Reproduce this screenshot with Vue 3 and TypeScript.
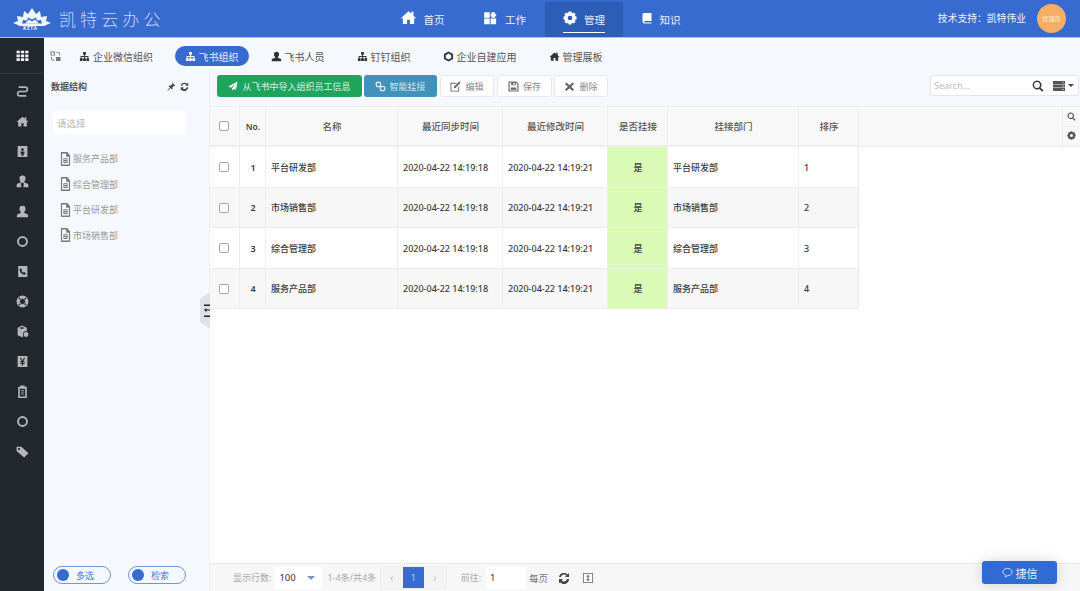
<script setup lang="ts">
function gear(): string {
  const pts: string[] = []
  const n = 8
  for (let i = 0; i < n; i++) {
    const a = (i / n) * Math.PI * 2
    const w = Math.PI / n
    const seq: [number, number][] = [[9, -w * 0.95], [11.5, -w * 0.5], [11.5, w * 0.5], [9, w * 0.95]]
    for (const [r, d] of seq) {
      pts.push(`${(12 + r * Math.cos(a + d)).toFixed(2)} ${(12 + r * Math.sin(a + d)).toFixed(2)}`)
    }
  }
  return `M${pts.join('L')}z M12 8a4 4 0 1 0 0 8a4 4 0 1 0 0-8z`
}

const icons: Record<string, string> = {
  home: 'M12 3L1 13h3v8h6v-6h4v6h6v-8h3l-4-3.6V4h-3v2.7z',
  work: 'M2 2h9.500v9.500H2zM2 13h9.500v9.500H2zM13 13h9.500v9.500H13zM14.500 2h6v3h2v4h-2v2.500h-6V9H13V5h1.500z',
  gear: gear(),
  book: 'M6 2h15v16H7.500a1.600 1.600 0 0 0 0 3H21v2H7a4 4 0 0 1-4-4V5a3 3 0 0 1 3-3z',
  sitemap: 'M9 2h6v6h-2v3h7.500v5H22v6h-6v-6h2.500v-3H13v3h2v6H9v-6h2v-3H5.500v3H8v6H2v-6h1.500v-5H11V8H9z',
  user: 'M12 1.500a5.500 5.500 0 0 1 5.500 6c0 2.200-1 4.500-2.500 5.500v1.500l6 2.500c1 .5 1.500 2 1.500 5.500H1.500c0-3.500.5-5 1.500-5.500l6-2.500V13C7.500 12 6.500 9.700 6.500 7.500a5.500 5.500 0 0 1 5.500-6z',
  hex: 'M12 1l10 5.500v11L12 23 2 17.500v-11zM12 5.500L6 9v6l6 3.500 6-3.500V9z',
  plane: 'M23 1L1 13l6 3L19 6 10 17.500V23l4-4 5 2z',
  times: 'M5.500 3L12 9l6.500-6L22 6.500 15.500 12.500 22 18.500 18.500 22 12 16l-6.500 6L2 18.500l6.500-6L2 6.500z',
  save: 'M1 1h17l5 5v17H1zM3.500 3.500v17h17V7l-3.500-3.500v6H7v-6zM11.500 4v4h3V4zM6 14h12v5H6z',
  edit: 'M1 4h14l-2 2H3v15h15v-8l2-2v12H1zM20 1l3 3-11 11-4 1 1-4z',
  tie: 'M12 1a5.500 5.500 0 0 1 5.500 6c0 2.200-.8 4.200-2.500 5.500v1l6.500 2.500c1 .4 1.500 2 1.500 6.500h-9.500l1-7-1.500-1h-2.500l-1.500 1 1 7H1c0-4.500.5-6.100 1.500-6.500L9 13.500v-1C7.300 11.200 6.500 9.200 6.500 7A5.500 5.500 0 0 1 12 1z',
  door: 'M3 2h18v20H3zM12 6a2.500 2.500 0 1 0 0 5 2.500 2.500 0 0 0 0-5zM8.500 12v4H10v4h4v-4h1.500v-4z',
  phone: 'M4 2h17v20H4zM8.500 6L6.500 8c0 5 4.500 10 10 10l2-2-3-3-2 1c-1.500-.7-2.800-2-3.500-3.500l1-2z',
  life: 'M12 1a11 11 0 1 0 0 22 11 11 0 0 0 0-22zM12 7a5 5 0 1 0 0 10 5 5 0 0 0 0-10zM4.500 6L6 4.500l4 4L8.500 10zM19.500 6L18 4.500l-4 4 1.500 1.500zM4.500 18L6 19.500l4-4L8.500 14zM19.500 18L18 19.500l-4-4 1.500-1.500z',
  cube: 'M11 1l9 4v6.500a5.500 5.500 0 0 0-7 7V23l-10-4V5zM11 3.500L6 5.500l5 2 5-2zM18.500 13a4.500 4.500 0 1 0 0 9 4.500 4.500 0 0 0 0-9z',
  yen: 'M3 2h18v20H3zM7 5l3.500 6H8v2h3v1.500H8v2h3V20h2v-3.500h3v-2h-3V13h3v-2h-2.500L17 5h-2.300L12 10 9.300 5z',
  clip: 'M4 3h4V1h8v2h4v21H4zM7 7v14h10V7zM9 9h6v1.500H9zM9 12.500h6V14H9zM9 16h6v1.500H9z',
  ring: 'M12 2a10 10 0 1 0 0 20 10 10 0 0 0 0-20zM12 5.500a6.500 6.500 0 1 1 0 13 6.500 6.500 0 0 1 0-13z',
  tags: 'M1 3h9l13 12-8 8L1 11zM5.500 5.500a2 2 0 1 0 0 4 2 2 0 0 0 0-4z',
  doc: 'M3 0h13l6 6v16a2 2 0 0 1-2 2H4a2 2 0 0 1-2-2V1zM4.500 2.500v19h15V8h-6V2.500zM7.500 10.500h9v8.500h-9zM9 12.500v1h6v-1zM9 15.500v1h6v-1z',
  refresh: 'M12 2a10 10 0 0 1 7 2.800L22 2v8h-8l2.800-2.800A6.500 6.500 0 0 0 5.800 10H2a10 10 0 0 1 10-8zM2 14h8l-2.800 2.800A6.500 6.500 0 0 0 18.200 14H22a10 10 0 0 1-17 7.200L2 22z',
  magnifier: 'M10 1a9 9 0 0 1 7.200 14.400L23 21.200 20.600 23.600l-5.800-5.800A9 9 0 1 1 10 1zM10 4.200a5.800 5.800 0 1 0 0 11.600 5.800 5.800 0 0 0 0-11.600z',
  fit: 'M2 2h20v20H2zM3.500 3.500v17h17v-17zM12 5.500l3.500 4H13v5h2.500L12 18.500l-3.500-4H11v-5H8.500z',
  grid3: 'M1 3h6v5H1zM9 3h6v5H9zM17 3h6v5h-6zM1 10h6v5H1zM9 10h6v5H9zM17 10h6v5h-6zM1 17h6v5H1zM9 17h6v5H9zM17 17h6v5h-6z',
  pin: 'M14 2l8 8-2 1-1.500-1-4 4 .5 4-2 2-3.500-4L2 23l-1-1 7-7.500-3.500-3.500 2-2 4 .5 4-4-1-1.500z',
  sync: 'M1 1h10v9H1zM3 3v5h6V3zM14 2h4a4 4 0 0 1 4 4v3h-2V6a2 2 0 0 0-2-2h-4zM2 13h2v3a3 3 0 0 0 3 3h3v2H7a5 5 0 0 1-5-5zM13 13h10v9H13z',
  route: 'M5 4h12a4 4 0 0 1 0 8H7a4 4 0 0 0 0 8h12',
}

const rail = ['route', 'home', 'door', 'tie', 'user', 'ring', 'phone', 'life', 'cube', 'yen', 'clip', 'ring', 'tags']

const navs = [
  { icon: 'home', label: '首页', active: false },
  { icon: 'work', label: '工作', active: false },
  { icon: 'gear', label: '管理', active: true },
  { icon: 'book', label: '知识', active: false },
]

const tabs = [
  { icon: 'sitemap', label: '企业微信组织', active: false },
  { icon: 'sitemap', label: '飞书组织', active: true },
  { icon: 'user', label: '飞书人员', active: false },
  { icon: 'sitemap', label: '钉钉组织', active: false },
  { icon: 'hex', label: '企业自建应用', active: false },
  { icon: 'home', label: '管理展板', active: false },
]

const tree = ['服务产品部', '综合管理部', '平台研发部', '市场销售部']

const actions = [
  { icon: 'edit', label: '编辑', width: 54 },
  { icon: 'save', label: '保存', width: 55 },
  { icon: 'times', label: '删除', width: 54 },
]

const columns = ['名称', '最近同步时间', '最近修改时间', '是否挂接', '挂接部门', '排序']

const rows = [
  { no: 1, name: '平台研发部' },
  { no: 2, name: '市场销售部' },
  { no: 3, name: '综合管理部' },
  { no: 4, name: '服务产品部' },
]
</script>

<template>
  <div class="app">
    <header class="topbar">
      <div class="brand">
        <div class="logo">
          <svg viewBox="0 0 38 23" width="38" height="23">
            <path
              class="logo-star"
              fill-rule="evenodd"
              d="M0 15l5-2-1-5 6 1 1-6 4 3 4-6 4 6 4-3 1 6 6-1-1 5 5 2-5 2-1 1H6l-1-1zM9 15.500h20l-1-3.500-4 .5-1-3-4 2-4-2-1 3-4-.5z"
            />
            <path class="logo-star" d="M12 15.500l4-4 3 2 3-2 4 4z" />
          </svg>
          <span class="logo-word">KETA</span>
        </div>
        <span class="brand-name">凯特云办公</span>
      </div>
      <nav class="nav">
        <div v-for="n in navs" :key="n.label" class="nav-item" :class="{ active: n.active }">
          <span class="nav-inner">
            <svg class="nav-icon" viewBox="0 0 24 24"><path :d="icons[n.icon]" fill-rule="evenodd" /></svg>
            <span>{{ n.label }}</span>
          </span>
        </div>
      </nav>
      <div class="support">技术支持：凯特伟业</div>
      <div class="avatar">管理员</div>
    </header>

    <div class="body">
      <aside class="rail">
        <div class="rail-top">
          <svg viewBox="0 0 24 24" class="rail-grid"><path :d="icons.grid3" /></svg>
        </div>
        <div class="rail-list">
          <div v-for="(r, i) in rail" :key="i" class="rail-item" :class="r">
            <svg viewBox="0 0 24 24"><path :d="icons[r]" fill-rule="evenodd" /></svg>
          </div>
        </div>
      </aside>

      <main class="main">
        <div class="tabs">
          <svg class="sync" viewBox="0 0 24 24"><path :d="icons.sync" fill-rule="evenodd" /></svg>
          <div v-for="t in tabs" :key="t.label" class="tab" :class="{ active: t.active }">
            <svg viewBox="0 0 24 24"><path :d="icons[t.icon]" fill-rule="evenodd" /></svg>
            <span>{{ t.label }}</span>
          </div>
        </div>

        <div class="content">
          <section class="panel">
            <div class="panel-head">
              <b>数据结构</b>
              <span class="panel-tools">
                <svg viewBox="0 0 24 24"><path :d="icons.pin" fill-rule="evenodd" /></svg>
                <svg viewBox="0 0 24 24"><path :d="icons.refresh" fill-rule="evenodd" /></svg>
              </span>
            </div>
            <div class="picker">请选择</div>
            <ul class="tree">
              <li v-for="d in tree" :key="d">
                <svg viewBox="0 0 24 24" preserveAspectRatio="none"><path :d="icons.doc" fill-rule="evenodd" /></svg>
                <span>{{ d }}</span>
              </li>
            </ul>
            <div class="toggles">
              <div class="toggle"><i></i><span>多选</span></div>
              <div class="toggle"><i></i><span>检索</span></div>
            </div>
            <div class="handle">
              <svg viewBox="0 0 10 37" width="10" height="37">
                <path d="M10 0v37L0 30V7z" fill="#dde1ea" />
                <path d="M4 12.500h6v1.500H4zM4 23.500h6v1.500H4zM4 18l2.500-2v1.400H10v1.200H6.500V20z" fill="#222" />
              </svg>
            </div>
          </section>

          <section class="workspace">
            <div class="toolbar">
              <button class="btn green">
                <svg viewBox="0 0 24 24"><path :d="icons.plane" /></svg>从飞书中导入组织员工信息
              </button>
              <button class="btn teal">
                <svg viewBox="0 0 24 24" class="outline"><circle cx="7.500" cy="7.500" r="5" /><circle cx="16.500" cy="16.500" r="5" /><path d="M10 10l4 4" /></svg>智能挂接
              </button>
              <button v-for="a in actions" :key="a.label" class="btn plain" :style="{ width: a.width + 'px' }">
                <svg viewBox="0 0 24 24"><path :d="icons[a.icon]" fill-rule="evenodd" /></svg>{{ a.label }}
              </button>
              <div class="search">
                <span class="search-hint">Search...</span>
                <svg class="search-icon" viewBox="0 0 24 24"><path :d="icons.magnifier" fill-rule="evenodd" /></svg>
                <span class="view-switch">
                  <svg viewBox="0 0 24 20"><path d="M0 0h24v6H0zM0 7h24v6H0zM0 14h24v6H0z" /><path class="led" d="M18 2h4v2h-4zM18 9h4v2h-4zM18 16h4v2h-4z" /></svg>
                  <i class="caret"></i>
                </span>
              </div>
            </div>

            <div class="table">
              <div class="thead">
                <div class="grid head-grid">
                  <div class="cell center"><span class="check"></span></div>
                  <div class="cell center no">No.</div>
                  <div v-for="c in columns" :key="c" class="cell center">{{ c }}</div>
                </div>
                <div class="filler"></div>
                <div class="side-tools">
                  <div><svg viewBox="0 0 24 24"><path :d="icons.magnifier" fill-rule="evenodd" /></svg></div>
                  <div><svg viewBox="0 0 24 24"><path :d="icons.gear" fill-rule="evenodd" /></svg></div>
                </div>
              </div>
              <div v-for="r in rows" :key="r.no" class="grid row" :class="{ even: r.no % 2 === 0 }">
                <div class="cell center"><span class="check"></span></div>
                <div class="cell center strong">{{ r.no }}</div>
                <div class="cell">{{ r.name }}</div>
                <div class="cell">2020-04-22 14:19:18</div>
                <div class="cell">2020-04-22 14:19:21</div>
                <div class="cell center yes">是</div>
                <div class="cell">{{ r.name }}</div>
                <div class="cell">{{ r.no }}</div>
              </div>
            </div>

            <footer class="pager">
              <span class="muted rows-label">显示行数:</span>
              <span class="box size-box">100<i class="caret blue"></i></span>
              <span class="muted count">1-4条/共4条</span>
              <span class="pages">
                <span class="page">‹</span>
                <span class="page current">1</span>
                <span class="page">›</span>
              </span>
              <span class="muted goto">前往:</span>
              <span class="box goto-box">1</span>
              <span class="per">每页</span>
              <svg class="foot-icon first" viewBox="0 0 24 24"><path :d="icons.refresh" fill-rule="evenodd" /></svg>
              <svg class="foot-icon fit" viewBox="0 0 24 24"><path :d="icons.fit" fill-rule="evenodd" /></svg>
            </footer>
          </section>
        </div>
      </main>
    </div>

    <button class="chat">
      <svg viewBox="0 0 24 24" width="11" height="11">
        <path d="M12 3c5.500 0 10 3.500 10 8s-4.500 8-10 8l-5 3 1-4c-3-1.500-6-3.500-6-7 0-4.500 4.500-8 10-8z" fill="none" stroke="#dfe9fb" stroke-width="2" />
      </svg>
      捷信
    </button>
  </div>
</template>

<style>
html, body { margin: 0; padding: 0; background: #fff; }
</style>

<style scoped>
* { box-sizing: border-box; }
.app {
  position: relative;
  width: 1080px;
  height: 591px;
  overflow: hidden;
  display: flex;
  flex-direction: column;
  font-family: "Noto Sans", "Noto Sans CJK SC", sans-serif;
  font-size: 9px;
  color: #333;
}
.topbar {
  flex: 0 0 38px;
  display: flex;
  align-items: stretch;
  background: #376bd0;
  border-bottom: 1px solid #a9c2ef;
  color: #fff;
}
.brand { width: 363px; display: flex; align-items: flex-start; padding: 8px 0 0 13px; }
.logo { position: relative; width: 38px; height: 23px; }
.logo svg { display: block; }
.logo-star { fill: #f2f5fc; }
.logo-word {
  position: absolute;
  left: 10px;
  bottom: 0;
  font-size: 5px;
  line-height: 6px;
  font-weight: 700;
  letter-spacing: .6px;
  color: #f2f5fc;
}
.brand-name {
  margin: 2px 0 0 8px;
  font-size: 17px;
  line-height: 20px;
  letter-spacing: 4.100px;
  font-weight: 300;
  color: #c6d6f4;
}
.nav { display: flex; align-items: stretch; padding-top: 2px; }
.nav-item { display: flex; width: 78px; justify-content: center; flex: none; }
.nav-item:nth-child(1) { width: 46px; margin-left: 36px; margin-right: 38px; }
.nav-item:nth-child(2) { width: 43px; margin-right: 19px; }
.nav-item:nth-child(3) { margin-right: 18px; }
.nav-item:nth-child(4) { width: 39px; }
.nav-item.active { background: #2e5db8; }
.nav-inner {
  position: relative;
  display: flex;
  align-items: center;
  gap: 7px;
  white-space: nowrap;
  font-size: 10.500px;
  color: #e9effb;
  height: 33px;
  padding-top: 2px;
}
.nav-icon { width: 14px; height: 14px; fill: #fff; margin-top: -4px; flex: none; }
.nav-item:nth-child(1) .nav-icon { width: 17px; height: 17px; }
.nav-item:nth-child(2) .nav-inner { gap: 8px; }
.nav-item:nth-child(4) .nav-icon { width: 12px; }
.nav-item.active .nav-inner::after {
  content: "";
  position: absolute;
  left: 0;
  right: 0;
  bottom: 2px;
  height: 1px;
  background: #fff;
}
.support {
  margin-left: auto;
  align-self: center;
  margin-top: -1px;
  font-size: 9.800px;
  color: #eef3fc;
}
.avatar {
  width: 29px;
  height: 29px;
  margin: 4px 14px 0 11px;
  border-radius: 50%;
  background: #f6ae66;
  color: #fbe9d6;
  font-size: 6px;
  display: flex;
  align-items: center;
  justify-content: center;
}
.body { flex: 1; display: flex; min-height: 0; }
.rail {
  width: 44px;
  background: #22282e;
  display: flex;
  flex-direction: column;
  align-items: stretch;
}
.rail-top {
  height: 36px;
  border-bottom: 1px solid #323940;
  display: flex;
  align-items: center;
  justify-content: center;
}
.rail-grid { width: 13px; height: 13px; fill: #f2f2f2; }
.rail-list { padding-top: 2px; }
.rail-item { height: 30px; display: flex; align-items: center; justify-content: center; }
.rail-item svg { width: 13px; height: 13px; fill: #b4b6b7; }
.rail-item.route svg { fill: none; stroke: #b4b6b7; stroke-width: 3; }
.main { flex: 1; min-width: 0; display: flex; flex-direction: column; background: #f5f8fc; }
.tabs { height: 35px; display: flex; align-items: center; padding: 1px 0 0 6px; }
.sync { width: 11px; height: 11px; fill: #777; margin-right: 18px; }
.tab { display: flex; align-items: center; gap: 3px; font-size: 10px; color: #555; margin-right: 21.500px; height: 20px; flex: none; }
.tab svg { width: 11px; height: 11px; fill: #333; }
.tab:nth-child(4), .tab:nth-child(5), .tab:nth-child(6) { margin-right: 32px; }
.tab.active {
  background: #376bd0;
  color: #e3ebfa;
  border-radius: 10px;
  padding: 0 10px;
  width: 74px;
  margin-right: 22px;
}
.tab.active svg { fill: #fff; }
.content { flex: 1; min-height: 0; display: flex; }
.panel {
  position: relative;
  width: 166px;
  display: flex;
  flex-direction: column;
  padding: 0 9px;
  border-right: 1px solid #eceef2;
}
.panel-head {
  height: 26px;
  display: flex;
  align-items: center;
  justify-content: space-between;
  padding: 1px 12px 0 0;
  margin-left: -2px;
  margin-right: -1px;
}
.panel-head b { font-size: 9px; font-weight: 700; color: #555; }
.panel-tools { display: flex; gap: 4px; }
.panel-tools svg { width: 9px; height: 9px; fill: #444; }
.picker {
  margin-top: 12px;
  width: 133px;
  height: 23px;
  background: #fff;
  border-radius: 2px;
  padding-left: 4px;
  display: flex;
  align-items: center;
  color: #b8b8b8;
  font-size: 9.500px;
}
.tree { list-style: none; margin: 12px 0 0; padding: 0 0 0 7px; flex: 1; }
.tree li { height: 25.500px; display: flex; align-items: center; gap: 2px; color: #9a9a9a; font-size: 9px; }
.tree svg { width: 11px; height: 14px; fill: #777; }
.toggles { display: flex; gap: 17px; padding-bottom: 7px; }
.toggle {
  width: 58px;
  height: 18px;
  border: 1px solid #6e95e6;
  border-radius: 9px;
  display: flex;
  align-items: center;
  padding-left: 3px;
  color: #4a78d8;
  font-size: 9px;
}
.toggle i { width: 12px; height: 12px; border-radius: 50%; background: #376bd0; margin-right: 7px; }
.handle { position: absolute; right: -1px; top: 219px; width: 10px; height: 37px; }
.handle svg { display: block; }
.workspace { flex: 1; min-width: 0; display: flex; flex-direction: column; }
.toolbar { height: 33px; display: flex; align-items: flex-start; padding: 2px 0 0 7px; gap: 2px; }
.btn {
  height: 22px;
  border-radius: 3px;
  border: 1px solid transparent;
  font: inherit;
  font-size: 9px;
  display: inline-flex;
  align-items: center;
  justify-content: center;
  gap: 4px;
  padding: 0;
  margin: 0;
}
.btn svg { width: 10px; height: 10px; }
.green { width: 145px; background: #1fa45c; color: #d9f3e4; }
.green svg { fill: #fff; }
.teal { width: 73px; background: #4092bb; color: #cfe6f1; gap: 3px; }
.teal svg { width: 11px; height: 11px; }
.outline { fill: none; stroke: #e4f1f7; stroke-width: 2.500; }
.plain { background: #fff; border-color: #e8e9ec; color: #888; }
.plain svg { width: 11px; height: 11px; fill: #666; }
.plain:nth-of-type(3), .plain:nth-of-type(4) { margin-left: 1px; }
.search {
  margin-left: auto;
  margin-right: 1px;
  width: 149px;
  height: 21px;
  background: #fff;
  border: 1px solid #e3e5e9;
  border-radius: 3px;
  display: flex;
  align-items: center;
  padding: 0 4px 0 3px;
}
.search-hint { color: #bbb; font-size: 9px; }
.search-icon { width: 12px; height: 12px; fill: #3a3a3a; margin-left: auto; }
.view-switch { display: inline-flex; align-items: center; gap: 3px; margin-left: 9px; }
.view-switch svg { width: 12px; height: 10px; fill: #555; }
.view-switch .led { fill: #aaa; }
.caret {
  width: 0;
  height: 0;
  border-left: 3px solid transparent;
  border-right: 3px solid transparent;
  border-top: 3px solid #444;
}
.table { background: #fff; flex: 1; min-height: 0; }
.thead { display: flex; height: 41px; background: #f8f8f8; border-top: 1px solid #efefef; border-bottom: 1px solid #eeeeee; }
.grid {
  width: 649px;
  display: grid;
  grid-template-columns: 30px 26px 132px 105px 105px 60px 131px 60px;
}
.head-grid .cell { height: 39px; color: #555; font-size: 9.500px; }
.head-grid .no { color: #444; font-weight: 600; font-size: 8.500px; }
.filler { flex: 1; }
.side-tools { width: 18px; border-left: 1px solid #efefef; }
.side-tools div { height: 19.500px; display: flex; align-items: center; justify-content: center; padding-right: 1px; border-bottom: 1px solid #efefef; }
.side-tools svg { width: 9px; height: 9px; fill: #555; }
.row { height: 40.500px; }
.row .cell { padding-top: 1px; }
.row.even { background: #f7f7f7; }
.cell {
  display: flex;
  align-items: center;
  padding-left: 5px;
  border-right: 1px solid #eeeeee;
  border-bottom: 1px solid #eeeeee;
  color: #3a3a3a;
  font-weight: 500;
}
.center { justify-content: center; padding-left: 1px; }
.strong { font-weight: 600; }
.yes { background: #d9fbb6; }
.check { width: 10px; height: 10px; border: 1px solid #a5a5a5; border-radius: 2px; background: #fff; margin-left: -2px; }
.pager {
  height: 28px;
  background: #f7f7f7;
  border-top: 1px solid #e9e9e9;
  display: flex;
  align-items: center;
  padding-left: 23px;
}
.muted { color: #aaa; font-size: 9px; }
.box {
  height: 22px;
  background: #fff;
  border-radius: 2px;
  color: #333;
  font-size: 9.500px;
  display: inline-flex;
  align-items: center;
  padding-left: 4px;
}
.size-box { width: 47px; margin-left: 4px; justify-content: space-between; padding-right: 7px; }
.caret.blue { border-top: 4px solid #7e95bf; border-left-width: 4px; border-right-width: 4px; }
.count { margin-left: 5px; }
.pages { display: flex; margin-left: 4px; border: 1px solid #eeeeee; border-radius: 2px; background: #f4f4f4; }
.page { width: 21.500px; height: 21px; display: flex; align-items: center; justify-content: center; color: #aaa; font-size: 12px; font-weight: 300; }
.page.current { background: #376bd0; color: #e3ebfa; font-size: 9px; }
.goto { margin-left: 14px; }
.goto-box { width: 40px; margin-left: 5px; }
.per { margin-left: 3px; color: #777; font-size: 9.500px; }
.foot-icon { width: 12px; height: 12px; fill: #444; margin-left: 12px; }
.foot-icon.first { margin-left: 10px; }
.foot-icon.fit { fill: #666; }
.chat {
  position: absolute;
  left: 982px;
  top: 561px;
  width: 75px;
  height: 23px;
  border: 0;
  border-radius: 3px;
  background: #2f6bd3;
  color: #e6eefb;
  font: inherit;
  font-size: 11px;
  display: flex;
  align-items: center;
  justify-content: center;
  gap: 3px;
  box-shadow: 0 0 14px rgba(0, 0, 0, .16);
}
</style>
